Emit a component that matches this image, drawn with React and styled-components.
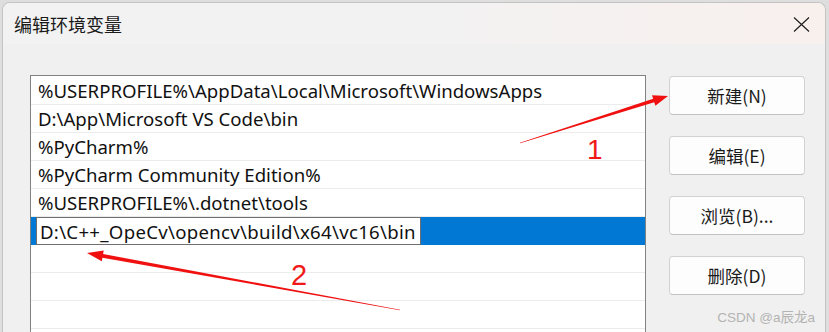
import React from "react";
import styled, { createGlobalStyle } from "styled-components";

const GlobalStyle = createGlobalStyle`
    html, body {
        margin: 0;
        padding: 0;
        background: #dedede;
        overflow: hidden;
    }
`;

const paths = [
    "%USERPROFILE%\\AppData\\Local\\Microsoft\\WindowsApps",
    "D:\\App\\Microsoft VS Code\\bin",
    "%PyCharm%",
    "%PyCharm Community Edition%",
    "%USERPROFILE%\\.dotnet\\tools",
];
const editing = "D:\\C++_OpeCv\\opencv\\build\\x64\\vc16\\bin";
const buttons = ["新建(N)", "编辑(E)", "浏览(B)...", "删除(D)"];

// tapered arrow: thin tail, thick shaft near the head, triangle head
function arrowPoints(x1, y1, x2, y2, headLen, headW, shaftW) {
    const dx = x2 - x1;
    const dy = y2 - y1;
    const len = Math.hypot(dx, dy);
    const ux = dx / len;
    const uy = dy / len;
    const nx = -uy;
    const ny = ux;
    const bx = x2 - ux * headLen;
    const by = y2 - uy * headLen;
    const pts = [
        [x1 + nx * 0.3, y1 + ny * 0.3],
        [bx + nx * shaftW / 2, by + ny * shaftW / 2],
        [bx + nx * headW / 2, by + ny * headW / 2],
        [x2, y2],
        [bx - nx * headW / 2, by - ny * headW / 2],
        [bx - nx * shaftW / 2, by - ny * shaftW / 2],
        [x1 - nx * 0.3, y1 - ny * 0.3],
    ];
    return pts.map((p) => p.map((v) => v.toFixed(1)).join(",")).join(" ");
}

export default function App() {
    return (
        <>
            <GlobalStyle />
            <Page>
                <Dialog>
                    <TitleBar>
                        <Title>编辑环境变量</Title>
                        <Close>
                            <svg width="17" height="15" viewBox="0 0 17 15">
                                <path d="M1 0.5 L16 14.5 M16 0.5 L1 14.5" stroke="#1b1b1b" strokeWidth="1.1" fill="none" />
                            </svg>
                        </Close>
                    </TitleBar>
                    <Content>
                        <ListBox>
                            {paths.map((p) => (
                                <Row key={p}>{p}</Row>
                            ))}
                            <Row selected>
                                <EditBox>{editing}</EditBox>
                            </Row>
                            <Row />
                            <Row />
                            <Row />
                        </ListBox>
                        <ButtonColumn>
                            {buttons.map((b) => (
                                <Button key={b}>{b}</Button>
                            ))}
                        </ButtonColumn>
                    </Content>
                    <Watermark>CSDN @a辰龙a</Watermark>
                </Dialog>
                <Annotations width="829" height="332" viewBox="0 0 829 332">
                    <polygon points={arrowPoints(520, 143, 668, 96, 15, 11, 3.6)} fill="#f01010" />
                    <polygon points={arrowPoints(400, 310, 87, 253, 16, 11, 3.8)} fill="#f01010" />
                    <text x="587" y="159" fill="#f01a1a" fontSize="28" fontFamily="'Liberation Sans', Arial, sans-serif">1</text>
                    <text x="291" y="285" fill="#f01a1a" fontSize="29" fontFamily="'Liberation Sans', Arial, sans-serif">2</text>
                </Annotations>
            </Page>
        </>
    );
}

const Page = styled.div`
    position: relative;
    width: 829px;
    height: 332px;
    padding: 2px 3px 0 2px;
    box-sizing: border-box;
    background: #dedede;
    overflow: hidden;
`;

const Dialog = styled.div`
    position: relative;
    height: 340px;
    display: flex;
    flex-direction: column;
    background: #f0f0f0;
    border: 1px solid #c4c4c4;
    border-bottom: none;
    border-radius: 8px 8px 0 0;
    overflow: hidden;
    font-family: "Noto Sans", "Noto Sans CJK SC", sans-serif;
`;

const TitleBar = styled.div`
    height: 41px;
    flex-shrink: 0;
    display: flex;
    align-items: center;
    justify-content: space-between;
    padding: 0 15px 0 11px;
    background: linear-gradient(to right, #f2f2f2, #f3f2f2 55%, #f8f0ed);
`;

const Title = styled.div`
    font-family: "Noto Sans CJK SC", sans-serif;
    font-size: 18px;
    color: #1a1a1a;
    margin-top: 1px;
`;

const Close = styled.div`
    display: flex;
    align-items: center;
    margin-top: 2px;
`;

const Content = styled.div`
    flex: 1;
    display: flex;
    align-items: flex-start;
    padding: 31px 20px 0 27px;
    gap: 23px;
`;

const ListBox = styled.div`
    width: 616px;
    height: 280px;
    box-sizing: border-box;
    background: #ffffff;
    border: 1px solid #828282;
    padding-top: 1px;
`;

const Row = styled.div`
    height: 28px;
    box-sizing: border-box;
    display: flex;
    align-items: center;
    padding-left: ${(p) => (p.selected ? "5px" : "7px")};
    border-bottom: 1px solid ${(p) => (p.selected ? "#0078d4" : "#ececec")};
    background: ${(p) => (p.selected ? "#0078d4" : "#ffffff")};
    font-size: 18.6px;
    color: #111111;
    white-space: nowrap;
`;

const EditBox = styled.div`
    height: 28px;
    box-sizing: border-box;
    margin-top: 1px;
    display: flex;
    align-items: center;
    padding: 0 4px 0 3px;
    background: #ffffff;
    border: 1px solid #6e6e6e;
    font-size: 18.6px;
    letter-spacing: 0.3px;
    color: #111111;
`;

const ButtonColumn = styled.div`
    display: flex;
    flex-direction: column;
    gap: 21px;
    padding-top: 1px;
`;

const Button = styled.div`
    width: 136px;
    height: 39px;
    box-sizing: border-box;
    display: flex;
    align-items: center;
    justify-content: center;
    background: #fdfdfd;
    border: 1px solid #d2d2d2;
    border-bottom-color: #c2c2c2;
    border-radius: 4px;
    font-family: "Noto Sans CJK SC", sans-serif;
    font-size: 17.5px;
    color: #1a1a1a;
`;

const Watermark = styled.div`
    position: absolute;
    right: 10px;
    top: 303px;
    font-family: "Liberation Sans", "Noto Sans CJK SC", sans-serif;
    font-size: 13.5px;
    color: #b3b3b3;
`;

const Annotations = styled.svg`
    position: absolute;
    left: 0;
    top: 0;
    pointer-events: none;
`;
